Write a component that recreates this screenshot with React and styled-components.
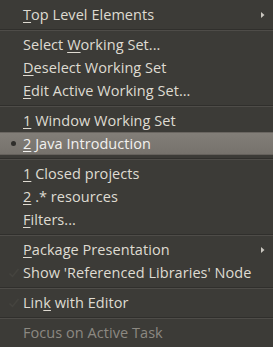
import React from "react";
import styled, { createGlobalStyle } from "styled-components";

const Global = createGlobalStyle`
  html, body { margin: 0; padding: 0; background: #3c3b37; }
  body { width: 273px; height: 347px; overflow: hidden; }
`;

const Menu = styled.div`
  box-sizing: border-box;
  width: 273px;
  height: 347px;
  padding: 3px 0;
  background: #3c3b37;
  display: flex;
  flex-direction: column;
  font-family: "Open Sans", "DejaVu Sans", sans-serif;
  font-size: 14.5px;
  font-weight: 500;
  color: #dfdbd2;
`;

const Item = styled.div`
  position: relative;
  box-sizing: border-box;
  height: 23px;
  display: flex;
  align-items: center;
  padding-left: 23px;
  padding-right: 10px;
  white-space: nowrap;
  color: ${(p) => (p.$disabled ? "#8c8982" : "#dfdbd2")};
  ${(p) =>
    p.$active &&
    `
    background: linear-gradient(#827e78, #76726c);
    border-top: 1px solid #6a6661;
    border-bottom: 1px solid #65615c;
    color: #f2f1ef;
  `}
`;

const Label = styled.span`
  flex: 1;
  letter-spacing: 0.05px;
`;

const U = styled.span`
  text-decoration: underline;
  text-underline-offset: 2px;
  text-decoration-thickness: 1px;
`;

const Sep = styled.div`
  height: 7px;
  display: flex;
  flex-direction: column;
  justify-content: center;
  &::before {
    content: "";
    display: block;
    height: 1px;
    background: #302f2c;
  }
  &::after {
    content: "";
    display: block;
    height: 1px;
    background: #4e4c48;
  }
`;

const Bullet = styled.span`
  position: absolute;
  left: 11px;
  top: 50%;
  width: 5px;
  height: 5px;
  margin-top: -2.5px;
  border-radius: 50%;
  background: #2f2e2b;
`;

const CheckMark = styled.svg`
  position: absolute;
  left: 8px;
  top: 50%;
  margin-top: -6px;
`;

const Arrow = styled.svg`
  position: absolute;
  right: 8px;
  top: 50%;
  margin-top: -3px;
`;

const Check = () => (
  <CheckMark width="12" height="12" viewBox="0 0 12 12">
    <path d="M1.5 6.5 L4.5 9.5 L10.5 2" fill="none" stroke="#45443f" strokeWidth="1.5" />
  </CheckMark>
);

const Sub = () => (
  <Arrow width="4" height="6" viewBox="0 0 4 6">
    <path d="M0 0 L3.5 3 L0 6 Z" fill="#c9c6bf" />
  </Arrow>
);

export default function App() {
  return (
    <>
      <Global />
      <Menu>
        <Item>
          <Label><U>T</U>op Level Elements</Label>
          <Sub />
        </Item>
        <Sep />
        <Item><Label>Select <U>W</U>orking Set...</Label></Item>
        <Item><Label><U>D</U>eselect Working Set</Label></Item>
        <Item><Label><U>E</U>dit Active Working Set...</Label></Item>
        <Sep />
        <Item><Label><U>1</U> Window Working Set</Label></Item>
        <Item $active>
          <Bullet />
          <Label><U>2</U> Java Introduction</Label>
        </Item>
        <Sep />
        <Item><Label><U>1</U> Closed projects</Label></Item>
        <Item><Label><U>2</U> .* resources</Label></Item>
        <Item><Label><U>F</U>ilters...</Label></Item>
        <Sep />
        <Item>
          <Label><U>P</U>ackage Presentation</Label>
          <Sub />
        </Item>
        <Item>
          <Check />
          <Label>Show 'Referenced Libraries' Node</Label>
        </Item>
        <Sep />
        <Item>
          <Check />
          <Label>Lin<U>k</U> with Editor</Label>
        </Item>
        <Sep />
        <Item $disabled><Label>Focus on Active Task</Label></Item>
      </Menu>
    </>
  );
}
